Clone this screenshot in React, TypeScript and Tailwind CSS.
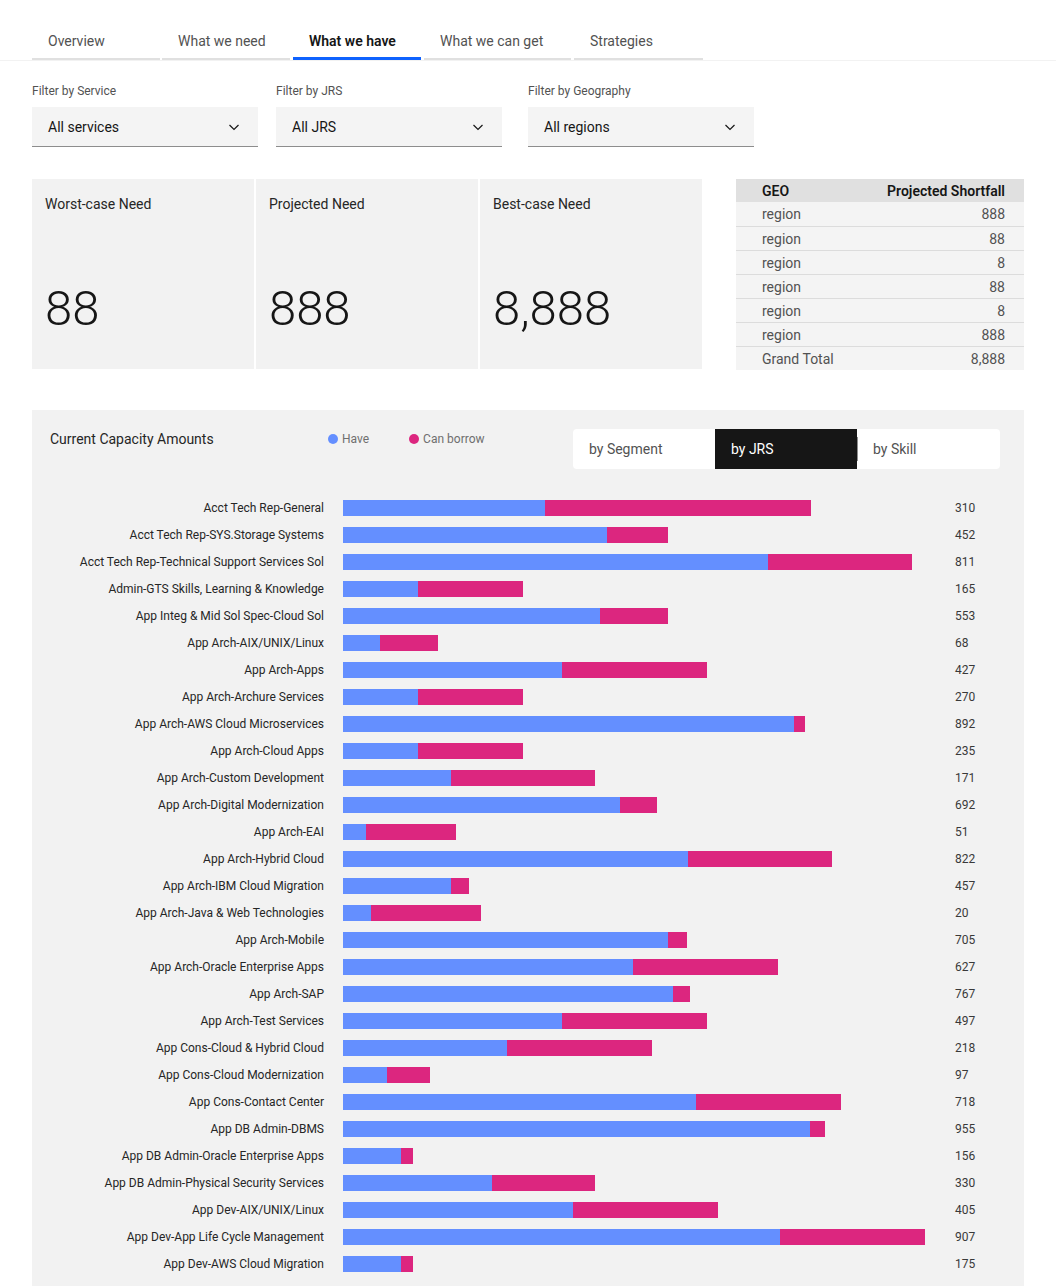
import React from 'react';

type Row = { label: string; have: number; borrow: number; value: number };

// bar lengths in px, read off the chart (start 343)
const rows: Row[] = [
  { label: 'Acct Tech Rep-General', have: 202, borrow: 266, value: 310 },
  { label: 'Acct Tech Rep-SYS.Storage Systems', have: 264, borrow: 61, value: 452 },
  { label: 'Acct Tech Rep-Technical Support Services Sol', have: 425, borrow: 144, value: 811 },
  { label: 'Admin-GTS Skills, Learning & Knowledge', have: 75, borrow: 105, value: 165 },
  { label: 'App Integ & Mid Sol Spec-Cloud Sol', have: 257, borrow: 68, value: 553 },
  { label: 'App Arch-AIX/UNIX/Linux', have: 37, borrow: 58, value: 68 },
  { label: 'App Arch-Apps', have: 219, borrow: 145, value: 427 },
  { label: 'App Arch-Archure Services', have: 75, borrow: 105, value: 270 },
  { label: 'App Arch-AWS Cloud Microservices', have: 451, borrow: 11, value: 892 },
  { label: 'App Arch-Cloud Apps', have: 75, borrow: 105, value: 235 },
  { label: 'App Arch-Custom Development', have: 108, borrow: 144, value: 171 },
  { label: 'App Arch-Digital Modernization', have: 277, borrow: 37, value: 692 },
  { label: 'App Arch-EAI', have: 23, borrow: 90, value: 51 },
  { label: 'App Arch-Hybrid Cloud', have: 345, borrow: 144, value: 822 },
  { label: 'App Arch-IBM Cloud Migration', have: 108, borrow: 18, value: 457 },
  { label: 'App Arch-Java & Web Technologies', have: 28, borrow: 110, value: 20 },
  { label: 'App Arch-Mobile', have: 325, borrow: 19, value: 705 },
  { label: 'App Arch-Oracle Enterprise Apps', have: 290, borrow: 145, value: 627 },
  { label: 'App Arch-SAP', have: 330, borrow: 17, value: 767 },
  { label: 'App Arch-Test Services', have: 219, borrow: 145, value: 497 },
  { label: 'App Cons-Cloud & Hybrid Cloud', have: 164, borrow: 145, value: 218 },
  { label: 'App Cons-Cloud Modernization', have: 44, borrow: 43, value: 97 },
  { label: 'App Cons-Contact Center', have: 353, borrow: 145, value: 718 },
  { label: 'App DB Admin-DBMS', have: 467, borrow: 15, value: 955 },
  { label: 'App DB Admin-Oracle Enterprise Apps', have: 58, borrow: 12, value: 156 },
  { label: 'App DB Admin-Physical Security Services', have: 149, borrow: 103, value: 330 },
  { label: 'App Dev-AIX/UNIX/Linux', have: 230, borrow: 145, value: 405 },
  { label: 'App Dev-App Life Cycle Management', have: 437, borrow: 145, value: 907 },
  { label: 'App Dev-AWS Cloud Migration', have: 58, borrow: 12, value: 175 },
];

const tabs = [
  { name: 'Overview', w: 'w-[128px]' },
  { name: 'What we need', w: 'w-[128px] ml-[2px]' },
  { name: 'What we have', w: 'w-[128px] ml-[3px]', active: true },
  { name: 'What we can get', w: 'w-[147px] ml-[3px]' },
  { name: 'Strategies', w: 'w-[129px] ml-[3px]' },
];

const regions = [
  ['region', '888'],
  ['region', '88'],
  ['region', '8'],
  ['region', '88'],
  ['region', '8'],
  ['region', '888'],
  ['Grand Total', '8,888'],
];

const Chevron = () => (
  <svg width="16" height="16" viewBox="0 0 16 16" fill="none" stroke="#161616" strokeWidth="1.2">
    <path d="M3.5 6l4.5 4.5L12.5 6" />
  </svg>
);

const Select: React.FC<{ label: string; value: string; className?: string }> = ({ label, value, className }) => (
  <div className={`w-[226px] ${className ?? ''}`}>
    <div className="text-xs leading-4 text-[#525252] mb-[8px]">{label}</div>
    <div className="h-10 bg-[#f4f4f4] border-b border-[#8d8d8d] flex items-center justify-between pl-4 pr-4 text-sm text-[#161616]">
      <span>{value}</span>
      <Chevron />
    </div>
  </div>
);

const Kpi: React.FC<{ title: string; value: string }> = ({ title, value }) => (
  <div className="w-[222px] h-[190px] bg-[#f2f2f2] flex flex-col px-[13px] pt-[15px] pb-[36px]">
    <div className="text-sm leading-5 text-[#262626]">{title}</div>
    <div className="mt-auto text-[49px] leading-[48px] font-light text-[#161616]">{value}</div>
  </div>
);

export default function App() {
  return (
    <div className="min-h-screen bg-white font-['Roboto','Liberation_Sans',sans-serif] text-[#161616]">
      <div className="pt-6 border-b border-[#f2f2f2]">
        <div className="flex items-end pl-8">
          {tabs.map((t) => (
            <div
              key={t.name}
              className={`${t.w} h-9 flex items-center pl-4 text-sm ${
                t.active
                  ? 'border-b-[3px] border-[#0f62fe] font-semibold text-[#161616]'
                  : 'border-b-2 border-[#e0e0e0] text-[#525252]'
              }`}
            >
              {t.name}
            </div>
          ))}
        </div>
      </div>

      <div className="px-8">
        <div className="flex mt-[22px]">
          <Select label="Filter by Service" value="All services" />
          <Select label="Filter by JRS" value="All JRS" className="ml-[18px]" />
          <Select label="Filter by Geography" value="All regions" className="ml-[26px]" />
        </div>

        <div className="flex mt-8">
          <div className="flex gap-[2px]">
            <Kpi title="Worst-case Need" value="88" />
            <Kpi title="Projected Need" value="888" />
            <Kpi title="Best-case Need" value="8,888" />
          </div>
          <div className="ml-auto w-[288px] text-sm">
            <div className="h-[23px] bg-[#e0e0e0] flex items-center justify-between pl-[26px] pr-[19px] font-semibold text-[#161616]">
              <span>GEO</span>
              <span>Projected Shortfall</span>
            </div>
            {regions.map(([r, v], i) => (
              <div
                key={i}
                className={`h-6 bg-[#f4f4f4] flex items-center justify-between pl-[26px] pr-[19px] text-[#525252] ${
                  i > 0 ? 'border-t border-[#dcdcdc]' : ''
                }`}
              >
                <span>{r}</span>
                <span>{v}</span>
              </div>
            ))}
          </div>
        </div>

        <div className="mt-[40px] bg-[#f2f2f2] pt-[19px] pb-6">
          <div className="flex items-start pr-6">
            <div className="w-[296px] pl-[18px] text-sm leading-5 text-[#262626]">Current Capacity Amounts</div>
            <div className="flex items-center gap-10 text-xs leading-5 text-[#6f6f6f]">
              <div className="flex items-center gap-1">
                <span className="w-[10px] h-[10px] rounded-full bg-[#648fff]" />
                <span>Have</span>
              </div>
              <div className="flex items-center gap-1">
                <span className="w-[10px] h-[10px] rounded-full bg-[#dc267f]" />
                <span>Can borrow</span>
              </div>
            </div>
            <div className="ml-auto flex h-10 bg-white rounded-sm text-sm">
              <div className="w-[142px] flex items-center pl-4 text-[#525252]">by Segment</div>
              <div className="w-[142px] flex items-center pl-4 bg-[#161616] text-white">by JRS</div>
              <div className="w-[143px] flex items-center relative pl-4 text-[#525252]">
                <span className="absolute left-0 top-2 bottom-2 w-px bg-[#8d8d8d]" />
                by Skill
              </div>
            </div>
          </div>

          <div className="mt-[25px]">
            {rows.map((r) => (
              <div key={r.label} className="h-[27px] flex items-center text-xs">
                <div className="w-[292px] text-right text-[#262626] whitespace-nowrap">{r.label}</div>
                <div className="ml-[19px] w-[600px] h-4 flex">
                  <div className="h-full bg-[#648fff]" style={{ width: r.have }} />
                  <div className="h-full bg-[#dc267f]" style={{ width: r.borrow }} />
                </div>
                <div className="ml-3 text-[#393939]">{r.value}</div>
              </div>
            ))}
          </div>
        </div>
      </div>
    </div>
  );
}
